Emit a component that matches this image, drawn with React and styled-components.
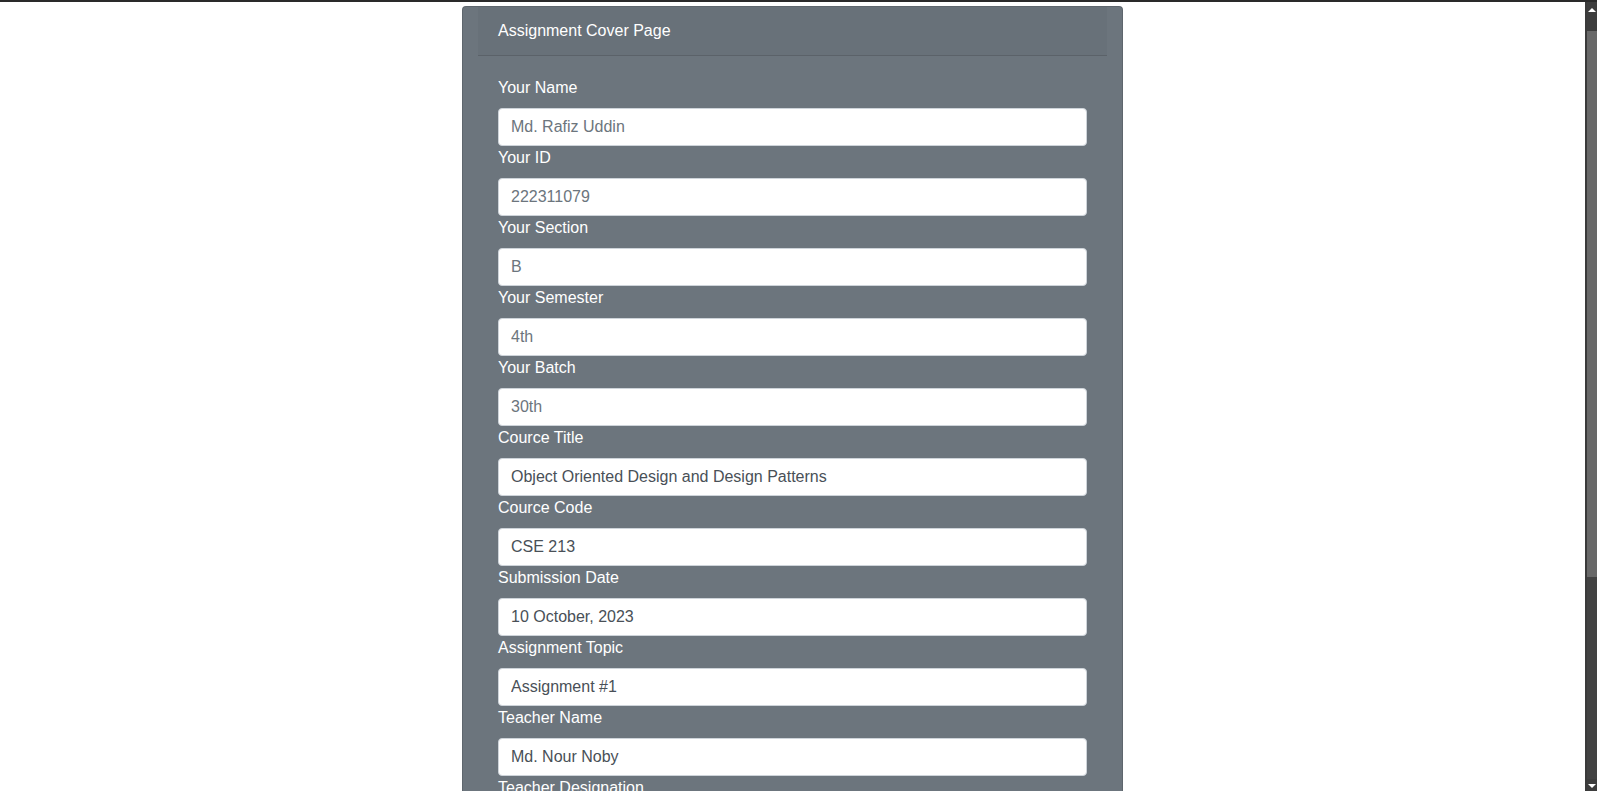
import React from "react";
import styled, { createGlobalStyle } from "styled-components";

const GlobalStyle = createGlobalStyle`
  html, body {
    margin: 0;
    padding: 0;
    height: 100%;
    overflow: hidden;
    background: #ffffff;
  }
  * { box-sizing: border-box; }
  body {
    font-family: "Liberation Sans", Arial, Helvetica, sans-serif;
    font-size: 16px;
    line-height: 1.5;
  }
`;

const Frame = styled.div`
  height: 100vh;
  display: flex;
  flex-direction: column;
`;

const TopStrip = styled.div`
  height: 2px;
  flex: none;
  background: #2a2a2a;
`;

const Viewport = styled.div`
  flex: 1;
  min-height: 0;
  display: flex;
`;

const Main = styled.main`
  flex: 1;
  min-width: 0;
  overflow: hidden;
  background: #ffffff;
`;

const Card = styled.section`
  width: 661px;
  margin: 4px auto 0;
  padding: 0 15px;
  background: #6c757d;
  border: 1px solid rgba(0, 0, 0, 0.125);
  border-radius: 4px;
`;

const CardHeader = styled.header`
  padding: 12px 20px;
  background: rgba(0, 0, 0, 0.03);
  border-bottom: 1px solid rgba(0, 0, 0, 0.125);
  color: #ffffff;
  line-height: 24px;
`;

const CardBody = styled.form`
  padding: 20px;
  display: flex;
  flex-direction: column;
`;

const Field = styled.div`
  display: flex;
  flex-direction: column;
`;

const Label = styled.label`
  display: block;
  color: #ffffff;
  line-height: 24px;
  margin-bottom: 8px;
`;

const Input = styled.input`
  display: block;
  width: 100%;
  height: 38px;
  padding: 6px 12px;
  font-family: inherit;
  font-size: 16px;
  line-height: 24px;
  color: #495057;
  background: #ffffff;
  border: 1px solid #ced4da;
  border-radius: 4px;
  outline: none;
  &::placeholder {
    color: #6c757d;
    opacity: 1;
  }
`;

const ScrollBar = styled.div`
  width: 12px;
  flex: none;
  display: flex;
  flex-direction: column;
  background: #424242;
  border-left: 2px solid #3a3a3a;
`;

const ArrowBox = styled.div`
  height: ${(p) => p.$h}px;
  flex: none;
  display: flex;
  align-items: ${(p) => (p.$down ? "flex-end" : "flex-start")};
  justify-content: center;
  padding: ${(p) => (p.$down ? "0 0 3px" : "6px 0 0")};
  background: #3d3d3d;
`;

const Triangle = styled.span`
  width: 0;
  height: 0;
  border-left: 4px solid transparent;
  border-right: 4px solid transparent;
  ${(p) =>
    p.$down
      ? "border-top: 4px solid #ffffff;"
      : "border-bottom: 4px solid #ffffff;"}
`;

const Thumb = styled.div`
  height: 546px;
  flex: none;
  background: #686868;
`;

const Track = styled.div`
  flex: 1;
`;

const fields = [
  { label: "Your Name", placeholder: "Md. Rafiz Uddin" },
  { label: "Your ID", placeholder: "222311079" },
  { label: "Your Section", placeholder: "B" },
  { label: "Your Semester", placeholder: "4th" },
  { label: "Your Batch", placeholder: "30th" },
  { label: "Cource Title", value: "Object Oriented Design and Design Patterns" },
  { label: "Cource Code", value: "CSE 213" },
  { label: "Submission Date", value: "10 October, 2023" },
  { label: "Assignment Topic", value: "Assignment #1" },
  { label: "Teacher Name", value: "Md. Nour Noby" },
  { label: "Teacher Designation", value: "Lecturer" },
  { label: "Department", value: "CSE" },
];

export default function App() {
  return (
    <>
      <GlobalStyle />
      <Frame>
        <TopStrip />
        <Viewport>
          <Main>
            <Card>
              <CardHeader>Assignment Cover Page</CardHeader>
              <CardBody onSubmit={(e) => e.preventDefault()}>
                {fields.map((f, i) => (
                  <Field key={f.label}>
                    <Label htmlFor={`f${i}`}>{f.label}</Label>
                    <Input
                      id={`f${i}`}
                      type="text"
                      placeholder={f.placeholder}
                      defaultValue={f.value}
                    />
                  </Field>
                ))}
              </CardBody>
            </Card>
          </Main>
          <ScrollBar>
            <ArrowBox $h={29}>
              <Triangle />
            </ArrowBox>
            <Thumb />
            <Track />
            <ArrowBox $h={12} $down>
              <Triangle $down />
            </ArrowBox>
          </ScrollBar>
        </Viewport>
      </Frame>
    </>
  );
}
